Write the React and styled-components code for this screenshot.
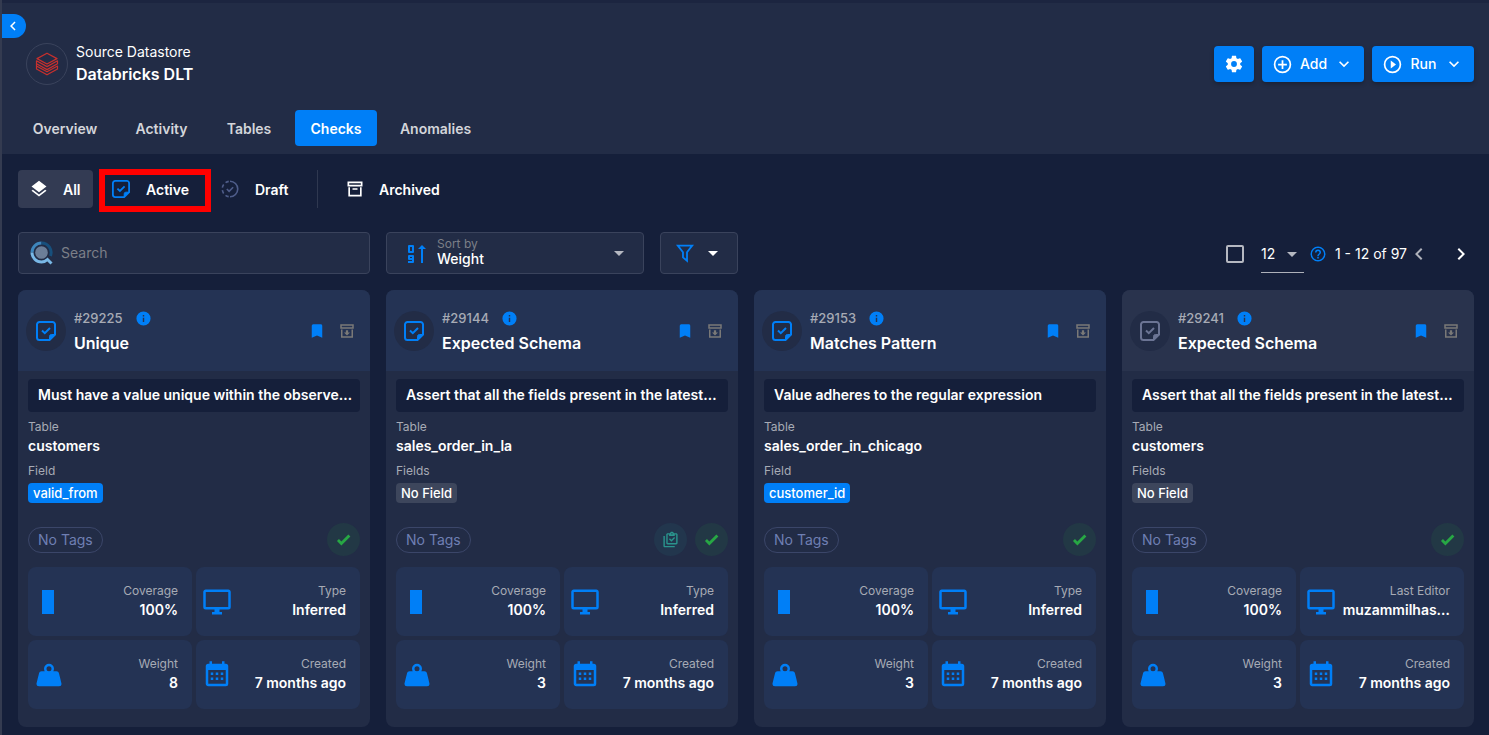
import React from "react";
import styled, { createGlobalStyle, css } from "styled-components";

const c = {
  page: "#151f3a",
  surface: "#222c46",
  raised: "#243354",
  primary: "#007ff7",
  border: "#3a435c",
  muted: "#a7abb5",
  text: "#ffffff",
};

const Global = createGlobalStyle`
  *, *::before, *::after { box-sizing: border-box; }
  body {
    margin: 0;
    background: ${c.page};
    color: ${c.text};
    font-family: Inter, "Liberation Sans", sans-serif;
    font-size: 14px;
    line-height: 20px;
  }
  button, input, select { font: inherit; color: inherit; }
  button { border: 0; background: none; padding: 0; cursor: pointer; }
  h1, h2, p, dl, dd, dt { margin: 0; }
`;

/* ---------- icons ---------- */

const RING =
  "M12,20C7.59,20 4,16.41 4,12C4,7.59 7.59,4 12,4C16.41,4 20,7.59 20,12C20,16.41 16.41,20 12,20M12,2A10,10 0 0,0 2,12A10,10 0 0,0 12,22A10,10 0 0,0 22,12A10,10 0 0,0 12,2";

const paths = {
  chevronLeft: "M15.41,16.58L10.83,12L15.41,7.41L14,6L8,12L14,18L15.41,16.58Z",
  chevronRight: "M8.59,16.58L13.17,12L8.59,7.41L10,6L16,12L10,18L8.59,16.58Z",
  chevronDown: "M7.41,8.58L12,13.17L16.59,8.58L18,10L12,16L6,10L7.41,8.58Z",
  menuDown: "M7,10L12,15L17,10H7Z",
  cog: "M12,15.5A3.5,3.5 0 0,1 8.5,12A3.5,3.5 0 0,1 12,8.5A3.5,3.5 0 0,1 15.5,12A3.5,3.5 0 0,1 12,15.5M19.43,12.97C19.47,12.65 19.5,12.33 19.5,12C19.5,11.67 19.47,11.34 19.43,11L21.54,9.37C21.73,9.22 21.78,8.95 21.66,8.73L19.66,5.27C19.54,5.05 19.27,4.96 19.05,5.05L16.56,6.05C16.04,5.66 15.5,5.32 14.87,5.07L14.5,2.42C14.46,2.18 14.25,2 14,2H10C9.75,2 9.54,2.18 9.5,2.42L9.13,5.07C8.5,5.32 7.96,5.66 7.44,6.05L4.95,5.05C4.73,4.96 4.46,5.05 4.34,5.27L2.34,8.73C2.21,8.95 2.27,9.22 2.46,9.37L4.57,11C4.53,11.34 4.5,11.67 4.5,12C4.5,12.33 4.53,12.65 4.57,12.97L2.46,14.63C2.27,14.78 2.21,15.05 2.34,15.27L4.34,18.73C4.46,18.95 4.73,19.03 4.95,18.95L7.44,17.94C7.96,18.34 8.5,18.68 9.13,18.93L9.5,21.58C9.54,21.82 9.75,22 10,22H14C14.25,22 14.46,21.82 14.5,21.58L14.87,18.93C15.5,18.67 16.04,18.34 16.56,17.94L19.05,18.95C19.27,19.03 19.54,18.95 19.66,18.73L21.66,15.27C21.78,15.05 21.73,14.78 21.54,14.63L19.43,12.97Z",
  plus: RING + "M13,7H11V11H7V13H11V17H13V13H17V11H13V7Z",
  play: RING + "M10,16.5L16,12L10,7.5V16.5Z",
  help:
    RING +
    "M11,18H13V16H11V18M12,6A4,4 0 0,0 8,10H10A2,2 0 0,1 12,8A2,2 0 0,1 14,10C14,12 11,11.75 11,15H13C13,12.75 16,12.5 16,10A4,4 0 0,0 12,6Z",
  layers:
    "M12,16L19.36,10.27L21,9L12,2L3,9L4.63,10.27M12,18.54L4.62,12.81L3,14.07L12,21.07L21,14.07L19.37,12.8L12,18.54Z",
  archive:
    "M20 21H4V10H6V19H18V10H20V21M3 3H21V9H3V3M9.5 11H14.5C14.78 11 15 11.22 15 11.5V13H9V11.5C9 11.22 9.22 11 9.5 11M5 5V7H19V5H5Z",
  archiveDown: "M20 21H4V10H6V19H18V10H20V21M3 3H21V9H3V3M5 5V7H19V5H5M10.5 11V14H8L12 18L16 14H13.5V11",
  bookmark: "M17,3H7A2,2 0 0,0 5,5V21L12,18L19,21V5C19,3.89 18.1,3 17,3Z",
  info: "M13,9H11V7H13M13,17H11V11H13M12,2A10,10 0 0,0 2,12A10,10 0 0,0 12,22A10,10 0 0,0 22,12A10,10 0 0,0 12,2Z",
  check: "M9,20.42L2.79,14.21L5.62,11.38L9,14.77L18.88,4.88L21.71,7.71L9,20.42Z",
  clipboard:
    "M4,7V21H18V23H4C2.9,23 2,22.1 2,21V7H4M20,3C21.1,3 22,3.9 22,5V17C22,18.1 21.1,19 20,19H8C6.9,19 6,18.1 6,17V5C6,3.9 6.9,3 8,3H11.18C11.6,1.84 12.7,1 14,1C15.3,1 16.4,1.84 16.82,3H20M14,3A1,1 0 0,0 13,4A1,1 0 0,0 14,5A1,1 0 0,0 15,4A1,1 0 0,0 14,3M10,7V5H8V17H20V5H18V7H10M18.5,10L13.3,15.2L9.8,11.7L11.2,10.3L13.3,12.4L17.1,8.6L18.5,10Z",
  monitor:
    "M21,16H3V4H21M21,2H3C1.89,2 1,2.89 1,4V16A2,2 0 0,0 3,18H10V20H8V22H16V20H14V18H21A2,2 0 0,0 23,16V4C23,2.89 22.1,2 21,2Z",
  weight:
    "M12,3A4,4 0 0,1 16,7C16,7.73 15.81,8.41 15.46,9H18C18.95,9 19.75,9.67 19.95,10.56C21.96,18.57 22,18.78 22,19A2,2 0 0,1 20,21H4A2,2 0 0,1 2,19C2,18.78 2.04,18.57 4.05,10.56C4.25,9.67 5.05,9 6,9H8.54C8.19,8.41 8,7.73 8,7A4,4 0 0,1 12,3M12,5A2,2 0 0,0 10,7A2,2 0 0,0 12,9A2,2 0 0,0 14,7A2,2 0 0,0 12,5Z",
  calendar:
    "M9,10V12H7V10H9M13,10V12H11V10H13M17,10V12H15V10H17M19,3A2,2 0 0,1 21,5V19A2,2 0 0,1 19,21H5C3.89,21 3,20.1 3,19V5A2,2 0 0,1 5,3H6V1H8V3H16V1H18V3H19M19,19V8H5V19H19M9,14V16H7V14H9M13,14V16H11V14H13M17,14V16H15V14H17Z",
  column: "M6.4,2.4H16V21.6H6.4Z",
};

const Svg = styled.svg`
  display: block;
  flex: none;
  width: ${(p) => p.$size}px;
  height: ${(p) => p.$size}px;
  color: ${(p) => p.$color || "inherit"};
`;

const Icon = ({ name, size = 24, color }) => (
  <Svg viewBox="0 0 24 24" $size={size} $color={color} fill="currentColor" aria-hidden="true">
    <path d={paths[name]} fillRule="evenodd" />
  </Svg>
);

const NoteCheck = ({ size = 20, color }) => (
  <Svg viewBox="0 0 20 20" $size={size} $color={color} fill="none" stroke="currentColor" strokeWidth="2" aria-hidden="true">
    <path d="M13.5 19H3.5A2.5 2.5 0 0 1 1 16.5V3.5A2.5 2.5 0 0 1 3.5 1H16.5A2.5 2.5 0 0 1 19 3.5V13.5Z" />
    <path d="M13.5 18.5V15.5A2 2 0 0 1 15.5 13.5H18.5Z" fill="currentColor" strokeWidth="1" />
    <path d="M6 9.5L8.8 12.2L14 7" />
  </Svg>
);

const DraftCheck = ({ size = 20, color }) => (
  <Svg viewBox="0 0 20 20" $size={size} $color={color} fill="none" stroke="currentColor" strokeWidth="1.8" aria-hidden="true">
    <path d="M10 1.4A8.6 8.6 0 0 1 10 18.6" />
    <path d="M10 18.6A8.6 8.6 0 0 1 10 1.4" strokeDasharray="3.8 2.9" strokeDashoffset="-1.5" />
    <path d="M6.5 10L9 12.5L13.5 8" />
  </Svg>
);

const DatabricksLogo = () => (
  <Svg viewBox="0 0 24 24" $size={24} $color="#c8302d" fill="none" stroke="currentColor" strokeWidth="1.2" strokeLinejoin="round" aria-hidden="true">
    <path d="M12 1.2L22 6.6L12 12L2 6.6Z" />
    <path d="M1.5 8.8L12 14.6L22.5 8.8V11.8L12 17.6L1.5 11.8Z" />
    <path d="M1.5 11.8V17L12 22.8L22.5 17V14L12 19.8L1.5 14" />
  </Svg>
);

const SearchMark = () => (
  <Svg viewBox="0 0 24 24" $size={24} fill="none" aria-hidden="true">
    <circle cx="11.5" cy="11.5" r="6.3" fill="#6c7e98" />
    <path d="M11.5 2A9.5 9.5 0 0 0 2 11.5" stroke="#3e86bd" strokeWidth="3" />
    <path d="M11.5 2A9.5 9.5 0 0 1 20.4 15" stroke="#174f7c" strokeWidth="3" />
    <path d="M2 11.5A9.5 9.5 0 0 0 11.5 21C14 21 16 20 17.5 18.5L21.5 22.5" stroke="#79b8e6" strokeWidth="3" />
  </Svg>
);

const SortMark = () => (
  <Svg viewBox="0 0 24 24" $size={24} $color={c.primary} fill="none" stroke="currentColor" strokeWidth="2" strokeLinejoin="round" aria-hidden="true">
    <path d="M5 5H9V11H5ZM9 18H5V15H9V21H4" />
    <path d="M18 22V6" />
    <path d="M18 4L22 8H14Z" fill="currentColor" stroke="none" />
  </Svg>
);

const FilterMark = () => (
  <Svg viewBox="0 0 24 24" $size={22} $color={c.primary} fill="none" stroke="currentColor" strokeWidth="2" aria-hidden="true">
    <path d="M4.2 4H19.8L14.2 11.2V20.5L9.8 16.8V11.2Z" />
  </Svg>
);

/* ---------- shell ---------- */

const Shell = styled.div`
  position: relative;
  min-height: 100vh;
  border-left: 2px solid #343b50;
  background: ${c.page};
`;

const Header = styled.header`
  padding: 40px 15px 8px 16px;
  background: ${c.surface};
  border-top: 3px solid #1c2540;
`;

const CollapseButton = styled.button`
  position: absolute;
  top: 14px;
  left: 0;
  display: grid;
  place-items: center;
  width: 24px;
  height: 24px;
  padding-right: 2px;
  border-radius: 0 12px 12px 0;
  background: ${c.primary};
`;

const HeaderTop = styled.div`
  display: flex;
  align-items: center;
  justify-content: space-between;
  height: 42px;
`;

const Identity = styled.div`
  display: flex;
  align-items: center;
  gap: 8px;
  padding-left: 8px;
`;

const LogoRing = styled.span`
  display: grid;
  place-items: center;
  width: 42px;
  height: 42px;
  border: 1px solid ${c.border};
  border-radius: 50%;
`;

const Names = styled.div`
  padding-bottom: 2px;
`;

const Kicker = styled.p`
  font-size: 14px;
  line-height: 22px;
`;

const PageTitle = styled.h1`
  font-size: 16px;
  line-height: 22px;
  font-weight: 600;
`;

const Actions = styled.div`
  display: flex;
  gap: 8px;
`;

const ActionButton = styled.button`
  display: flex;
  align-items: center;
  justify-content: ${(p) => (p.$square ? "center" : "space-between")};
  width: ${(p) => (p.$square ? 40 : 102)}px;
  height: 36px;
  padding: 0 10px;
  border-radius: 4px;
  background: ${c.primary};
  font-weight: 500;
  box-shadow: 0 2px 4px rgba(0, 0, 0, 0.25);
`;

const Tabs = styled.nav`
  display: flex;
  gap: 8px;
  margin-top: 25px;
`;

const Tab = styled.a`
  display: flex;
  align-items: center;
  justify-content: center;
  width: ${(p) => p.$width}px;
  height: 36px;
  padding-top: 2px;
  border-radius: 4px;
  color: ${(p) => (p.$active ? c.text : "#d3d5da")};
  background: ${(p) => (p.$active ? c.primary : "transparent")};
  font-weight: 600;
  text-decoration: none;
`;

const Main = styled.main`
  padding: 16px 15px 8px 16px;
`;

/* ---------- toolbar ---------- */

const StatusBar = styled.div`
  display: flex;
  align-items: center;
  height: 38px;
`;

const StatusButton = styled.button`
  position: relative;
  display: flex;
  align-items: center;
  gap: ${(p) => p.$gap || 14}px;
  width: ${(p) => p.$width}px;
  height: 38px;
  padding: 0 11px;
  border-radius: 4px;
  background: ${(p) => (p.$selected ? "#333b53" : "transparent")};
  font-weight: 600;
  ${(p) =>
    p.$marked &&
    css`
      margin-left: 8px;
      &::after {
        content: "";
        position: absolute;
        inset: -1px -1px -4px -2px;
        border: 6px solid #ff0000;
      }
    `}
`;

const StatusText = styled.span`
  padding-top: 2px;
`;

const Divider = styled.span`
  width: 1px;
  height: 38px;
  margin-right: 16px;
  background: #2f3850;
`;

const Toolbar = styled.div`
  display: grid;
  grid-template-columns: repeat(4, minmax(0, 1fr));
  gap: 16px;
  margin-top: 24px;
`;

const SearchBox = styled.label`
  display: flex;
  align-items: center;
  gap: 7px;
  height: 42px;
  padding: 0 11px;
  border: 1px solid ${c.border};
  border-radius: 4px;
  background: ${c.surface};
`;

const SearchInput = styled.input`
  flex: 1;
  min-width: 0;
  border: 0;
  outline: 0;
  padding: 0;
  background: none;
  &::placeholder { color: #7c7f88; opacity: 1; }
`;

const SortGroup = styled.div`
  grid-column: span 2;
  display: flex;
  gap: 16px;
`;

const SortBox = styled.label`
  display: flex;
  align-items: center;
  gap: 9px;
  width: 258px;
  height: 42px;
  padding: 0 12px 0 17px;
  border: 1px solid ${c.border};
  border-radius: 4px;
  background: ${c.surface};
`;

const SortText = styled.span`
  flex: 1;
  display: flex;
  flex-direction: column;
  padding-bottom: 2px;
`;

const SortLabel = styled.span`
  font-size: 12px;
  line-height: 14px;
  color: #7c7f88;
`;

const PlainSelect = styled.select`
  appearance: none;
  width: 100%;
  border: 0;
  outline: 0;
  padding: 0;
  margin: 0;
  background: transparent;
  line-height: 16px;
  font-weight: ${(p) => (p.$strong ? 500 : 400)};
`;

const FilterButton = styled.button`
  display: flex;
  align-items: center;
  justify-content: space-between;
  width: 78px;
  height: 42px;
  padding: 0 12px 0 13px;
  border: 1px solid ${c.border};
  border-radius: 4px;
  background: ${c.surface};
`;

const Pager = styled.div`
  display: flex;
  align-items: center;
  justify-content: flex-end;
  height: 42px;
  margin-top: 1px;
`;

const SelectAll = styled.input`
  appearance: none;
  width: 18px;
  height: 18px;
  margin: 0 17px 0 0;
  border: 2px solid #b5b8c1;
  border-radius: 2px;
`;

const PageSize = styled.label`
  display: flex;
  align-items: center;
  width: 43px;
  height: 37px;
  margin-right: 5px;
  border-bottom: 1px solid #aeb1ba;
`;

const PageRange = styled.span`
  margin-left: 8px;
  white-space: nowrap;
`;

const PageStep = styled.button`
  display: grid;
  place-items: center;
  width: 24px;
  height: 24px;
  color: ${(p) => (p.disabled ? "#aeb1ba" : c.text)};
  & + & { margin: 0 1px 0 18px; }
`;

/* ---------- check cards ---------- */

const Grid = styled.section`
  display: grid;
  grid-template-columns: repeat(4, minmax(0, 1fr));
  gap: 16px;
  margin-top: 15px;
`;

const Card = styled.article`
  border-radius: 8px;
  overflow: hidden;
  background: ${c.surface};
`;

const CardHead = styled.header`
  display: flex;
  align-items: center;
  height: 81px;
  padding: 0 14px 0 8px;
  background: ${(p) => (p.$inactive ? "#29334d" : c.raised)};
`;

const Avatar = styled.span`
  display: grid;
  place-items: center;
  flex: none;
  width: 40px;
  height: 40px;
  margin-right: 8px;
  border-radius: 50%;
  background: ${c.surface};
`;

const CardTitles = styled.div`
  flex: 1;
  min-width: 0;
  padding-top: 1px;
`;

const CheckId = styled.p`
  display: flex;
  align-items: center;
  gap: 12px;
  font-size: 13px;
  line-height: 24px;
  font-weight: 500;
  color: ${c.muted};
`;

const CardTitle = styled.h2`
  font-size: 16px;
  line-height: 26px;
  font-weight: 600;
`;

const CardTools = styled.div`
  display: flex;
  gap: 12px;
`;

const CardBody = styled.div`
  padding: 8px 10px 18px;
`;

const Description = styled.p`
  height: 33px;
  padding: 0 8px 0 10px;
  border-radius: 4px;
  background: ${c.page};
  line-height: 32px;
  font-weight: 600;
  white-space: nowrap;
  overflow: hidden;
`;

const Facts = styled.dl`
  display: flex;
  flex-direction: column;
  align-items: flex-start;
  padding-top: 5px;
`;

const FactLabel = styled.dt`
  font-size: 12px;
  line-height: 20px;
  color: ${c.muted};
`;

const FactValue = styled.dd`
  line-height: 18px;
  margin-bottom: 6px;
  font-weight: 600;
`;

const Chip = styled.dd`
  height: 20px;
  margin-top: 2px;
  padding: 0 5px;
  border-radius: 4px;
  background: ${(p) => (p.$empty ? "#3d465c" : c.primary)};
  font-size: 13px;
  line-height: 20px;
  font-weight: 500;
`;

const TagRow = styled.div`
  display: flex;
  align-items: center;
  gap: 8px;
  margin: 20px 0 11px;
`;

const TagPill = styled.span`
  height: 26px;
  margin-right: auto;
  padding: 0 9px;
  border: 1px solid #3b4669;
  border-radius: 13px;
  line-height: 24px;
  color: #6f7fb3;
`;

const StatusDot = styled.span`
  display: grid;
  place-items: center;
  width: 33px;
  height: 33px;
  border-radius: 50%;
  background: ${(p) => (p.$teal ? "#22364d" : "#223845")};
`;

const Stats = styled.dl`
  display: grid;
  grid-template-columns: repeat(2, minmax(0, 1fr));
  gap: 4px;
`;

const Stat = styled.div`
  display: flex;
  align-items: center;
  justify-content: space-between;
  height: 69px;
  padding: 0 14px 0 6px;
  border-radius: 8px;
  background: ${c.raised};
  text-align: right;
`;

const StatText = styled.div`
  display: flex;
  flex-direction: column;
  padding-bottom: 2px;
`;

const StatLabel = styled.dt`
  font-size: 12px;
  line-height: 18px;
  color: ${c.muted};
`;

const StatValue = styled.dd`
  line-height: 20px;
  font-weight: 600;
`;

const checks = [
  { id: "#29225", title: "Unique", text: "Must have a value unique within the observe…", table: "customers", fieldLabel: "Field", field: "valid_from", type: "Inferred", weight: "8" },
  { id: "#29144", title: "Expected Schema", text: "Assert that all the fields present in the latest…", table: "sales_order_in_la", fieldLabel: "Fields", type: "Inferred", weight: "3", template: true },
  { id: "#29153", title: "Matches Pattern", text: "Value adheres to the regular expression", table: "sales_order_in_chicago", fieldLabel: "Field", field: "customer_id", type: "Inferred", weight: "3" },
  { id: "#29241", title: "Expected Schema", text: "Assert that all the fields present in the latest…", table: "customers", fieldLabel: "Fields", editor: "muzammilhas…", weight: "3", inactive: true },
];

const StatTile = ({ icon, label, value }) => (
  <Stat>
    <Icon name={icon} size={30} color={c.primary} />
    <StatText>
      <StatLabel>{label}</StatLabel>
      <StatValue>{value}</StatValue>
    </StatText>
  </Stat>
);

const CheckCard = ({ check }) => (
  <Card>
    <CardHead $inactive={check.inactive}>
      <Avatar>
        <NoteCheck color={check.inactive ? "#6b7494" : c.primary} />
      </Avatar>
      <CardTitles>
        <CheckId>
          {check.id}
          <Icon name="info" size={17} color={c.primary} />
        </CheckId>
        <CardTitle>{check.title}</CardTitle>
      </CardTitles>
      <CardTools>
        <button aria-label="Bookmark">
          <Icon name="bookmark" size={18} color={c.primary} />
        </button>
        <button aria-label="Archive">
          <Icon name="archiveDown" size={18} color="#7a7977" />
        </button>
      </CardTools>
    </CardHead>
    <CardBody>
      <Description>{check.text}</Description>
      <Facts>
        <FactLabel>Table</FactLabel>
        <FactValue>{check.table}</FactValue>
        <FactLabel>{check.fieldLabel}</FactLabel>
        <Chip $empty={!check.field}>{check.field || "No Field"}</Chip>
      </Facts>
      <TagRow>
        <TagPill>No Tags</TagPill>
        {check.template && (
          <StatusDot $teal>
            <Icon name="clipboard" size={17} color="#2a948d" />
          </StatusDot>
        )}
        <StatusDot>
          <Icon name="check" size={17} color="#27a744" />
        </StatusDot>
      </TagRow>
      <Stats>
        <StatTile icon="column" label="Coverage" value="100%" />
        {check.editor ? (
          <StatTile icon="monitor" label="Last Editor" value={check.editor} />
        ) : (
          <StatTile icon="monitor" label="Type" value={check.type} />
        )}
        <StatTile icon="weight" label="Weight" value={check.weight} />
        <StatTile icon="calendar" label="Created" value="7 months ago" />
      </Stats>
    </CardBody>
  </Card>
);

const tabs = [
  ["Overview", 94],
  ["Activity", 83],
  ["Tables", 76],
  ["Checks", 82],
  ["Anomalies", 101],
];

export default function App() {
  return (
    <Shell>
      <Global />
      <Header>
        <HeaderTop>
          <Identity>
            <LogoRing>
              <DatabricksLogo />
            </LogoRing>
            <Names>
              <Kicker>Source Datastore</Kicker>
              <PageTitle>Databricks DLT</PageTitle>
            </Names>
          </Identity>
          <Actions>
            <ActionButton $square aria-label="Settings">
              <Icon name="cog" size={20} />
            </ActionButton>
            <ActionButton>
              <Icon name="plus" size={21} />
              Add
              <Icon name="chevronDown" size={20} />
            </ActionButton>
            <ActionButton>
              <Icon name="play" size={21} />
              Run
              <Icon name="chevronDown" size={20} />
            </ActionButton>
          </Actions>
        </HeaderTop>
        <Tabs>
          {tabs.map(([name, width]) => (
            <Tab key={name} href="#" $width={width} $active={name === "Checks"}>
              {name}
            </Tab>
          ))}
        </Tabs>
      </Header>
      <CollapseButton aria-label="Collapse panel">
        <Icon name="chevronLeft" size={18} />
      </CollapseButton>
      <Main>
        <StatusBar>
          <StatusButton $width={75} $selected>
            <Icon name="layers" size={20} />
            <StatusText>All</StatusText>
          </StatusButton>
          <StatusButton $width={109} $gap={16} $marked>
            <NoteCheck size={18} color={c.primary} />
            <StatusText>Active</StatusText>
          </StatusButton>
          <StatusButton $width={107} $gap={16}>
            <DraftCheck size={18} color="#4f5d8a" />
            <StatusText>Draft</StatusText>
          </StatusButton>
          <Divider />
          <StatusButton $width={120}>
            <Icon name="archive" size={20} />
            <StatusText>Archived</StatusText>
          </StatusButton>
        </StatusBar>
        <Toolbar>
          <SearchBox>
            <SearchMark />
            <SearchInput aria-label="Search" placeholder="Search" />
          </SearchBox>
          <SortGroup>
            <SortBox>
              <SortMark />
              <SortText>
                <SortLabel>Sort by</SortLabel>
                <PlainSelect $strong defaultValue="Weight">
                  <option>Weight</option>
                </PlainSelect>
              </SortText>
              <Icon name="menuDown" size={24} color="#b5b8c1" />
            </SortBox>
            <FilterButton aria-label="Filter">
              <FilterMark />
              <Icon name="menuDown" size={24} />
            </FilterButton>
          </SortGroup>
          <Pager>
            <SelectAll type="checkbox" aria-label="Select all" />
            <PageSize>
              <PlainSelect aria-label="Checks per page" defaultValue="12">
                <option>12</option>
              </PlainSelect>
              <Icon name="menuDown" size={24} color="#b5b8c1" />
            </PageSize>
            <Icon name="help" size={18} color={c.primary} />
            <PageRange>1 - 12 of 97</PageRange>
            <PageStep disabled aria-label="Previous page">
              <Icon name="chevronLeft" />
            </PageStep>
            <PageStep aria-label="Next page">
              <Icon name="chevronRight" />
            </PageStep>
          </Pager>
        </Toolbar>
        <Grid>
          {checks.map((check) => (
            <CheckCard key={check.id} check={check} />
          ))}
        </Grid>
      </Main>
    </Shell>
  );
}
